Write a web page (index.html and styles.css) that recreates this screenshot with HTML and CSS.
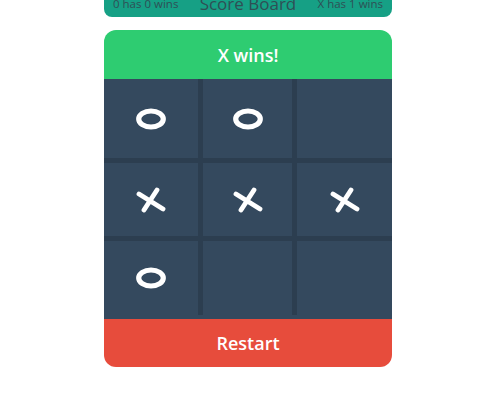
FILE: index.html
```html
<!DOCTYPE html>
<html>
<head>
<meta charset="utf-8">
<link rel="stylesheet" href="styles.css">
</head>
<body>
<div class="app">
  <div class="scoreboard">
    <span class="score">0 has 0 wins</span>
    <span class="title">Score Board</span>
    <span class="score">X has 1 wins</span>
  </div>
  <div class="card">
    <div class="status">X wins!</div>
    <div class="board-wrap">
      <div class="board">
        <div class="cell"><svg class="o" viewBox="0 0 30 22"><ellipse cx="15" cy="11" rx="12.3" ry="8" fill="none" stroke="#fff" stroke-width="5.2"/></svg></div>
        <div class="cell"><svg class="o" viewBox="0 0 30 22"><ellipse cx="15" cy="11" rx="12.3" ry="8" fill="none" stroke="#fff" stroke-width="5.2"/></svg></div>
        <div class="cell"></div>
        <div class="cell"><svg class="x" viewBox="0 0 30 26"><path d="M3 7 L27 22 M8 23 L21 3" fill="none" stroke="#fff" stroke-width="4.8" stroke-linecap="round"/></svg></div>
        <div class="cell"><svg class="x" viewBox="0 0 30 26"><path d="M3 7 L27 22 M8 23 L21 3" fill="none" stroke="#fff" stroke-width="4.8" stroke-linecap="round"/></svg></div>
        <div class="cell"><svg class="x" viewBox="0 0 30 26"><path d="M3 7 L27 22 M8 23 L21 3" fill="none" stroke="#fff" stroke-width="4.8" stroke-linecap="round"/></svg></div>
        <div class="cell"><svg class="o" viewBox="0 0 30 22"><ellipse cx="15" cy="11" rx="12.3" ry="8" fill="none" stroke="#fff" stroke-width="5.2"/></svg></div>
        <div class="cell"></div>
        <div class="cell"></div>
      </div>
    </div>
    <div class="restart">Restart</div>
  </div>
</div>
</body>
</html>
```
FILE: styles.css
```css
html, body {
  margin: 0;
  padding: 0;
  background: #fff;
  font-family: "Open Sans", Lato, sans-serif;
}
.app {
  width: 288px;
  margin-left: 104px;
}
.scoreboard {
  margin-top: -23px;
  height: 40px;
  background: #16a085;
  border-radius: 8px;
  display: flex;
  align-items: center;
  justify-content: space-between;
  padding: 12px 9px 0;
  box-sizing: border-box;
  color: #2f4f55;
}
.score {
  font-size: 11.5px;
  font-weight: 500;
}
.title {
  font-size: 17px;
}
.card {
  margin-top: 13px;
  border-radius: 12px;
  overflow: hidden;
}
.status {
  height: 49px;
  background: #2ecc71;
  color: #fff;
  font-size: 18px;
  font-weight: 600;
  display: flex;
  align-items: center;
  justify-content: center;
}
.board-wrap {
  background: #34495e;
  padding-bottom: 4px;
}
.board {
  display: grid;
  grid-template-columns: 94px 89px 95px;
  grid-template-rows: 79px 73px 74px;
  gap: 5px;
  background: #2c3e50;
}
.cell {
  background: #34495e;
  display: flex;
  align-items: center;
  justify-content: center;
}
.o {
  width: 30px;
  height: 22px;
}
.x {
  width: 30px;
  height: 26px;
}
.restart {
  height: 48px;
  background: #e74c3c;
  color: #fff;
  font-size: 18px;
  font-weight: 600;
  display: flex;
  align-items: center;
  justify-content: center;
}
```
